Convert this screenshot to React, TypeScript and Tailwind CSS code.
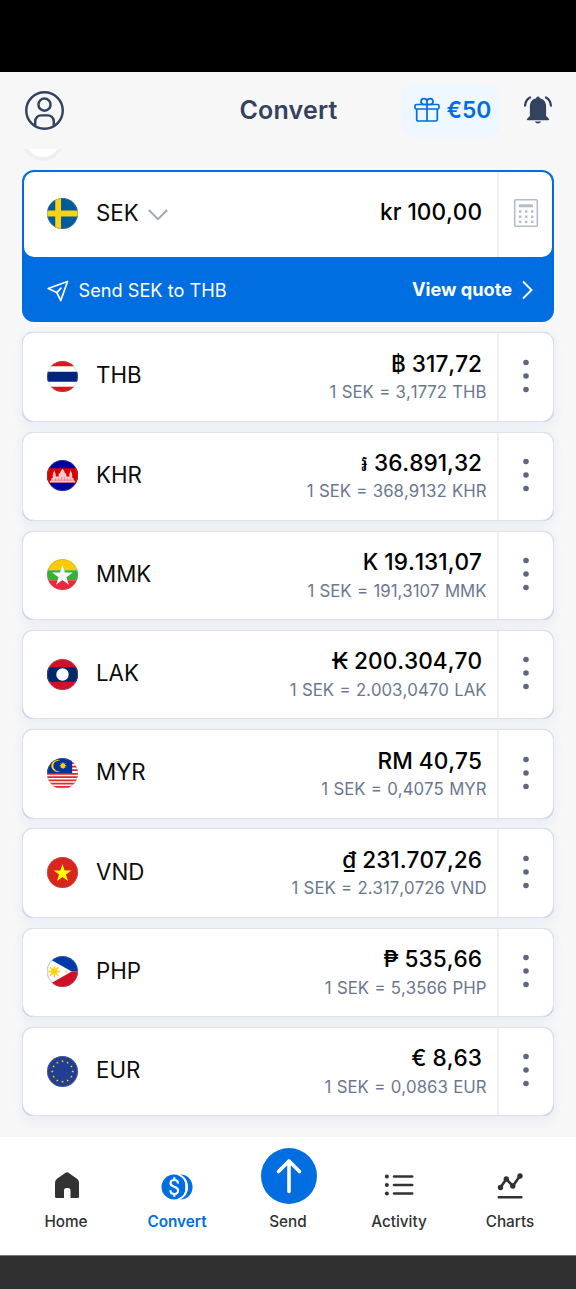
import type { ReactNode } from "react";

type Currency = { code: string; amount: string; rate: string };

const currencies: Currency[] = [
  { code: "THB", amount: "฿ 317,72", rate: "3,1772" },
  { code: "KHR", amount: "៛ 36.891,32", rate: "368,9132" },
  { code: "MMK", amount: "K 19.131,07", rate: "191,3107" },
  { code: "LAK", amount: "₭ 200.304,70", rate: "2.003,0470" },
  { code: "MYR", amount: "RM 40,75", rate: "0,4075" },
  { code: "VND", amount: "₫ 231.707,26", rate: "2.317,0726" },
  { code: "PHP", amount: "₱ 535,66", rate: "5,3566" },
  { code: "EUR", amount: "€ 8,63", rate: "0,0863" },
];

const STAR = "M0 -1L.225 -.309H.951L.363 .118L.588 .809L0 .382L-.588 .809L-.363 .118L-.951 -.309H-.225Z";

const flags: Record<string, ReactNode> = {
  SEK: (
    <>
      <path fill="#005b99" d="M0 0h32v32H0z" />
      <path fill="#fcd116" d="M8.5 0h6v32h-6zM0 13h32v6H0z" />
    </>
  ),
  THB: (
    <>
      <path fill="#fff" d="M0 0h32v32H0z" />
      <path fill="#e31219" d="M0 0h32v5.5H0zM0 26.5h32V32H0z" />
      <path fill="#00247d" d="M0 11h32v10.5H0z" />
    </>
  ),
  KHR: (
    <>
      <path fill="#0000a0" d="M0 0h32v32H0z" />
      <path fill="#d80000" d="M0 8.500h32v15H0z" />
      <path
        fill="#f7c9cc"
        d="M3 23.200v-1.500l1.500-.7v-2l1.500-.8v-3.500l1.500-4 1.500 4v2.300h3v-2.500l1.500-1 .8-2.500L16 9l1.700 2 .8 2.500 1.500 1v2.500h3v-2.300l1.500-4 1.500 4v3.500l1.500.8v2l1.500.7v1.500z"
      />
      <path stroke="#d65560" strokeWidth=".5" fill="none" d="M5 20.800h22M9 18.500v3M12 18.500v3M15 17.500v4M18 17.500v4M21 18.500v3M24 18.500v3" />
    </>
  ),
  MMK: (
    <>
      <path fill="#fecb00" d="M0 0h32v11.500H0z" />
      <path fill="#34b233" d="M0 11.500h32v10.500H0z" />
      <path fill="#ea2839" d="M0 22h32v10H0z" />
      <path fill="#fff" transform="translate(16 17.500) scale(11.2)" d={STAR} />
    </>
  ),
  LAK: (
    <>
      <path fill="#ce1126" d="M0 0h32v32H0z" />
      <path fill="#002868" d="M0 8.500h32v15H0z" />
      <circle cx="16" cy="16" r="6.400" fill="#fff" />
    </>
  ),
  MYR: (
    <>
      <path fill="#fff" d="M0 0h32v32H0z" />
      <path
        stroke="#e8242a"
        strokeWidth="1.800"
        d="M0 5.300h32M0 8.900h32M0 12.500h32M0 16.300h32M0 19.700h32M0 23.100h32M0 26.500h32M0 29.900h32"
      />
      <path fill="#0032a0" d="M0 0h26v15.700H0z" />
      <path fill="#ffd100" d="M14 3.200a6 6 0 1 0 0 10 5.400 5.400 0 1 1 0-10z" />
      <circle cx="16.500" cy="8" r="2.500" fill="#ffd100" />
      <path stroke="#ffd100" strokeWidth=".9" d="M16.500 4.600v6.800M13.100 8h6.800M14.100 5.600l4.800 4.800M14.100 10.400l4.800-4.800" />
    </>
  ),
  VND: (
    <>
      <path fill="#da251d" d="M0 0h32v32H0z" />
      <path fill="#ff0" transform="translate(16 17) scale(9.7)" d={STAR} />
    </>
  ),
  PHP: (
    <>
      <path fill="#0038a8" d="M0 0h32v16H0z" />
      <path fill="#ce1126" d="M0 16h32v16H0z" />
      <path fill="#fff" d="M-1 1L25.500 16-1 31z" />
      <circle cx="7.500" cy="16" r="3.400" fill="#fcd116" />
      <path stroke="#fcd116" strokeWidth="1.300" d="M7.500 9.800v12.400M1.300 16h12.400M3.100 11.600l8.800 8.800M3.100 20.400l8.800-8.800" />
      <circle cx="20" cy="16" r="1.100" fill="#fcd116" />
      <circle cx="2" cy="8" r="1" fill="#fcd116" />
    </>
  ),
  EUR: (
    <>
      <path fill="#233e90" d="M0 0h32v32H0z" />
      {Array.from({ length: 12 }, (_, i) => (
        <path
          key={i}
          fill="#ffdd00"
          transform={`translate(${16 + 10.6 * Math.sin((i * Math.PI) / 6)} ${16 - 10.6 * Math.cos((i * Math.PI) / 6)}) scale(1.5)`}
          d={STAR}
        />
      ))}
    </>
  ),
};

function Flag({ code }: { code: string }) {
  return (
    <svg viewBox="0 0 32 32" className="size-[31px] -mt-px shrink-0 rounded-full">
      {flags[code]}
      <circle cx="16" cy="16" r="15.600" fill="none" stroke="#8a8f98" strokeOpacity=".45" strokeWidth=".8" />
    </svg>
  );
}

function CurrencyRow({ code, amount, rate }: Currency) {
  return (
    <div className="h-[89.3px] shrink-0 rounded-[11px] bg-[#b4cfea] shadow-[0_4px_8px_2px_rgba(215,224,243,0.4)]">
      <div className="flex h-full rounded-[11px] rounded-b-[12.500px] border border-[#dfe1e5] bg-white">
        <div className="flex flex-1 items-center pl-[23.500px]">
          <Flag code={code} />
          <span className="-mt-[3px] ml-[18.500px] text-[22.300px] leading-7 text-[#0b0b0b]">{code}</span>
          <div className="ml-auto mr-[10.500px] flex flex-col items-end [font-kerning:none]">
            <span className="mr-[4.500px] text-[22.600px] font-[450] leading-7 text-black">{amount}</span>
            <span className="mt-[2.500px] text-[16.800px] leading-6 text-[#6b7790] [word-spacing:0.6px]">1 SEK = {rate} {code}</span>
          </div>
        </div>
        <div className="flex w-[56px] items-center justify-center border-l-2 border-[#edf0f1]">
          <svg viewBox="0 0 6 34" className="-mt-[2.500px] h-[34px] w-[6px]" fill="#5d6880">
            <circle cx="3" cy="3.500" r="2.800" />
            <circle cx="3" cy="17" r="2.800" />
            <circle cx="3" cy="30.500" r="2.800" />
          </svg>
        </div>
      </div>
    </div>
  );
}

function Header() {
  return (
    <header className="grid h-[76px] shrink-0 grid-cols-[1fr_auto_1fr] items-center pl-6 pr-[23px]">
      <svg viewBox="0 0 42 42" className="size-[41px]" fill="none" stroke="#33425f" strokeWidth="2.500">
        <circle cx="21" cy="21" r="18.700" />
        <circle cx="21" cy="15" r="6.200" />
        <path d="M11.500 36.500v-4.500a6 6 0 0 1 6-6h7a6 6 0 0 1 6 6v4.500" />
      </svg>
      <h1 className="mt-0.5 text-[25px] font-semibold tracking-[0.2px] text-[#33425f]">Convert</h1>
      <div className="flex items-center justify-end">
        <div className="flex h-[53px] w-[99px] items-center rounded-[13px] bg-[#eef7ff] pl-[12.500px] text-[#006ee0]">
          <svg viewBox="0 0 26 26" className="size-[26px]" fill="none" stroke="currentColor" strokeWidth="1.700">
            <rect x="1" y="7.500" width="24" height="4.500" rx="1.500" />
            <path d="M2.700 12v10.500a1.500 1.500 0 0 0 1.500 1.500h17.600a1.500 1.500 0 0 0 1.500-1.500V12M13 7.500V24" />
            <path d="M13 7.500H9.500a3 3 0 1 1 3.500-3zM13 7.500h3.500a3 3 0 1 0-3.500-3z" />
          </svg>
          <span className="ml-[7px] text-[22.800px] font-semibold">€50</span>
        </div>
        <svg viewBox="0 0 30 30" className="ml-[22.500px] mr-[0.500px] size-[30px]" fill="#33425f">
          <path d="M15 1.500a1.800 1.800 0 0 1 1.800 1.800c4 .8 6.300 4 6.300 8.200V21l2.600 2.600c.8.900.4 1.700-.6 1.700H4.900c-1 0-1.400-.8-.6-1.700L6.900 21v-9.500c0-4.200 2.300-7.400 6.300-8.200A1.800 1.800 0 0 1 15 1.500z" />
          <path d="M11.900 26.500h6.200a3.200 2.800 0 0 1-6.200 0z" />
          <path d="M7 2.500C4 4 2.400 6.700 2.100 10.500M23 2.500c3 1.500 4.600 4.200 4.900 8" fill="none" stroke="#33425f" strokeWidth="2.300" strokeLinecap="round" />
        </svg>
      </div>
    </header>
  );
}

function BaseCurrency() {
  return (
    <section className="h-[152px] shrink-0 rounded-[12px] bg-[#006ee0] px-[2px] pt-[2px]">
      <div className="flex h-[85.500px] rounded-[10px] bg-white">
        <div className="flex flex-1 items-center pl-[22.500px]">
          <Flag code="SEK" />
          <span className="-mt-0.5 ml-[18.500px] text-[22.300px] leading-7 text-[#0b0b0b]">SEK</span>
          <svg viewBox="0 0 20 12" className="ml-[9px] mt-0.5 h-3 w-5" fill="none" stroke="#9fa7b8" strokeWidth="2">
            <path d="M.8 1L10 10.200 19.200 1" />
          </svg>
          <span className="-mt-1 ml-auto mr-[15px] text-[22.600px] font-[450] leading-7 text-black [font-kerning:none]">kr 100,00</span>
        </div>
        <div className="flex w-[55px] items-center justify-center border-l-2 border-[#edf0f1]">
          <svg viewBox="0 0 26 30" className="-mt-[3px] h-[30px] w-[26px]" fill="none" stroke="#b6bbc8">
            <rect x="1.700" y="1.700" width="22.600" height="26.600" rx="1" strokeWidth="1.600" />
            <path strokeWidth="3" d="M6 7.800h14" />
            <path strokeWidth="2.400" strokeDasharray="2.400 3.600" d="M6 13.500h15M6 18.700h15M6 23.900h15" />
          </svg>
        </div>
      </div>
      <div className="flex h-[65px] items-center pl-[23px] pr-[18px] text-white">
        <svg viewBox="0 0 22 22" className="mt-0.5 size-[22px]" fill="none" stroke="currentColor" strokeWidth="1.700" strokeLinejoin="round" strokeLinecap="round">
          <path d="M1.200 8.500L20.500 1.500 13.800 20.500 9.800 12.600zM9.800 12.600l4.200-4.400" />
        </svg>
        <span className="ml-[9.500px] mt-0.5 text-[18.200px]">Send SEK to THB</span>
        <span className="ml-auto mt-px text-[18.200px] font-bold">View quote</span>
        <svg viewBox="0 0 12 20" className="ml-2.5 h-5 w-3" fill="none" stroke="currentColor" strokeWidth="1.900">
          <path d="M1 1.500L9.500 10 1 18.500" />
        </svg>
      </div>
    </section>
  );
}

function NavItem({ label, active, children }: { label: string; active?: boolean; children: ReactNode }) {
  return (
    <div className={`flex w-[111px] flex-col items-center ${active ? "text-[#006ee0]" : "text-[#303331]"}`}>
      <div className="flex h-[73px] items-end justify-center">{children}</div>
      <span className={`text-[15.300px] leading-6 ${active ? "font-semibold" : "font-medium"}`}>{label}</span>
    </div>
  );
}

function BottomNav() {
  return (
    <nav className="flex h-[118px] shrink-0 justify-center bg-white">
      <NavItem label="Home">
        <svg viewBox="0 0 26 28" className="mb-[11px] ml-px h-7 w-[26px]" fill="currentColor">
          <path d="M11.900 1.500a2 2 0 0 1 2.200 0l8.900 6.300a5 5 0 0 1 2 4V25.500a1.500 1.500 0 0 1-1.500 1.500h-7V19.500a2.500 2.500 0 0 0-2.500-2.500h-1.500a2.500 2.500 0 0 0-2.500 2.500V27h-7A1.500 1.500 0 0 1 1 25.500V11.800a5 5 0 0 1 2-4z" />
        </svg>
      </NavItem>
      <NavItem label="Convert" active>
        <svg viewBox="0 0 32 26" className="mb-[10.500px] h-[26px] w-8" fill="currentColor">
          <circle cx="13" cy="13" r="12.500" />
          <path d="M20 1.200c9.500 4 9.500 19.600 0 23.600l-1 .7c16.800 0 16.800-25 0-25z" />
          <path d="M22.300 3.200c5.200 5 5.200 14.600 0 19.600 2.800-5.500 2.800-14.100 0-19.600z" fill="#fff" />
          <path d="M17.500.7c10.800 2.800 10.800 21.800 0 24.600" fill="none" stroke="#fff" strokeWidth="1.600" />
          <path
            d="M17 9.500c0-2-1.200-3.500-3.700-3.500s-3.800 1.300-3.800 3.300c0 4.400 7.600 2.600 7.600 7 0 2.200-1.400 3.700-3.800 3.700-2.500 0-3.900-1.500-3.900-3.800M13.300 3.300V6M13.300 20v2.800"
            fill="none"
            stroke="#fff"
            strokeWidth="2.200"
          />
        </svg>
      </NavItem>
      <NavItem label="Send">
        <div className="mb-[6.500px] ml-px flex size-14 items-center justify-center rounded-full bg-[#006ee0]">
          <svg viewBox="0 0 28 36" className="h-9 w-7" fill="none" stroke="#fff" strokeWidth="3.600" strokeLinecap="round" strokeLinejoin="round">
            <path d="M14 33.500V3M3.500 13.500L14 3l10.500 10.500" />
          </svg>
        </div>
      </NavItem>
      <NavItem label="Activity">
        <svg viewBox="0 0 30 22" className="mb-[14px] h-[22px] w-[30px]" fill="none" stroke="currentColor" strokeLinecap="round">
          <path strokeWidth="2.600" d="M10 2.500h18.200M10 11h18.200M10 19.500h18.200" />
          <path strokeWidth="4" d="M2.800 2.500h.1M2.800 11h.1M2.800 19.500h.1" />
        </svg>
      </NavItem>
      <NavItem label="Charts">
        <svg viewBox="0 0 26 28" className="mb-[11px] h-7 w-[26px]" fill="none" stroke="currentColor" strokeLinecap="round" strokeLinejoin="round">
          <path strokeWidth="2.600" d="M1.800 26.200h22.500M3.500 16.500L9.300 8l6.500 7L23 5" />
          <path strokeWidth="5.400" d="M3.500 16.500h0M9.300 8h0M15.800 15h0M23 5h0" />
        </svg>
      </NavItem>
    </nav>
  );
}

export default function App() {
  return (
    <div className="flex h-[1289px] w-[576px] flex-col overflow-hidden bg-[#f7f7f7] font-[Inter,sans-serif]">
      <div className="h-[72px] shrink-0 bg-black" />
      <Header />
      <main className="flex min-h-0 flex-1 flex-col overflow-hidden px-[22px] pt-px">
        <div className="flex h-[12px] shrink-0 items-end overflow-hidden">
          <div className="size-[42px] shrink-0 rounded-full border-4 border-[#efefef] bg-white" />
        </div>
        <div className="mt-[8.500px] flex flex-col">
          <BaseCurrency />
        </div>
        <div className="mt-[10.800px] flex flex-col gap-[9.950px]">
          {currencies.map((c) => (
            <CurrencyRow key={c.code} {...c} />
          ))}
        </div>
      </main>
      <BottomNav />
      <div className="h-[34px] shrink-0 border-t border-[#777] bg-[#303030]" />
    </div>
  );
}
